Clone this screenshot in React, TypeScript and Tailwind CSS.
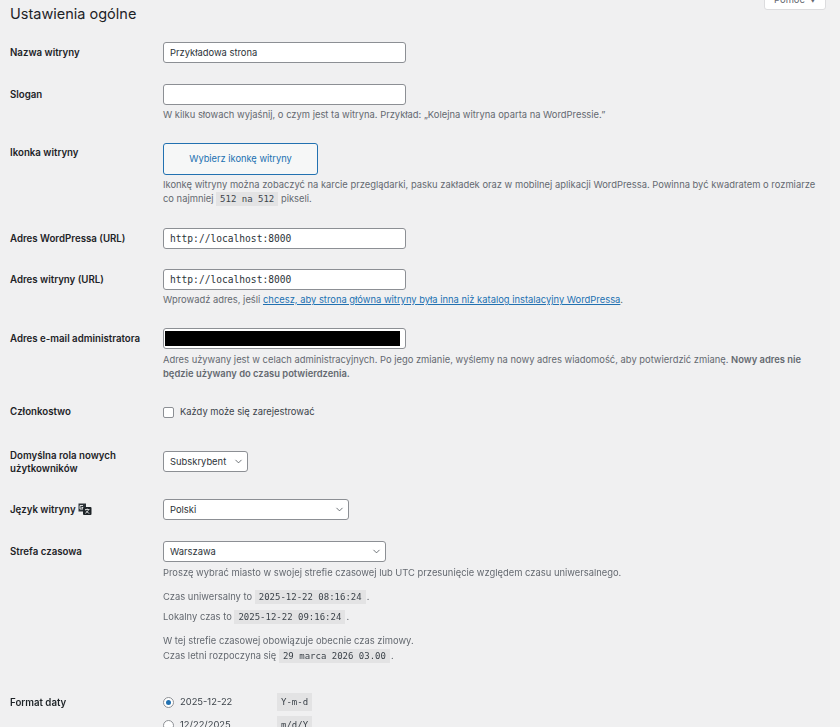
import React from 'react'
import { ChevronDown } from 'lucide-react'

const inputCls = 'block h-[21px] rounded-[3px] border border-[#8c8f94] bg-white px-[6px] text-[#2c3338]'
const descCls = 'max-w-[660px] text-[9.4px] leading-[14px] text-[#646970]'
const codeCls = 'bg-[#e3e3e4] px-[4px] py-[2px] font-["DejaVu_Sans_Mono",monospace] text-[9px] text-[#3c434a]'

const Row = ({
    label,
    top,
    labelCls = 'pt-[4px] leading-[14px]',
    children
  }:{
    label: React.ReactNode
    top: string
    labelCls?: string
    children: React.ReactNode
  }) => {
  return (
    <div className={`grid grid-cols-[153px_1fr] ${top}`}>
      <div className={`text-[9.7px] font-semibold text-[#1d2327] ${labelCls}`}>{label}</div>
      <div>{children}</div>
    </div>
  )
}

const Select = ({ value, width }:{ value: string, width: string }) => {
  return (
    <div className={`flex items-center justify-between !pr-[3px] ${inputCls} ${width}`}>
      <span className="pt-[1px] text-[9.4px]">{value}</span>
      <ChevronDown className="h-[11px] w-[11px] text-[#3c434a]" strokeWidth={1.6} />
    </div>
  )
}

const Translate = () => (
  <svg width="14" height="13" viewBox="0 0 14 13" className="ml-[2px] inline-block align-[-3px]">
    <path d="M0.5 0.5h7.5v3.5h-3v4.5h-4.5z" fill="#2c3338" />
    <path d="M2 2.5h3M2 2.5v3.5h3v-1.5h-1.5" fill="none" stroke="#f0f0f1" strokeWidth="0.9" />
    <rect x="5" y="4" width="8.5" height="8" rx="1" fill="#1d2327" />
    <path d="M7 6.5h4.5M9.2 5.5v1M10.6 6.5c-.5 2-2 3.2-3.4 3.8M7.8 7.6c.7 1.2 2 2.2 3.6 2.7" fill="none" stroke="#f0f0f1" strokeWidth="0.8" />
  </svg>
)

export default function App() {
  return (
    <div className="h-[727px] w-[840px] overflow-hidden bg-[#f0f0f1]">
      <div className='relative h-[727px] w-[840px] bg-[#f0f0f1] font-["Inter",sans-serif] blur-[0.4px]'>
        <div className="absolute right-0 top-0 h-full w-[10px] bg-[#f2f2f2]" />
        <div className="absolute right-[14px] top-[-10px] flex h-[20px] w-[62px] items-center justify-center gap-[5px] rounded-b-[3px] border border-[#dcdcde] bg-white text-[9.4px] text-[#646970]">
          Pomoc
          <span className="text-[6px]">▼</span>
        </div>

        <div className="px-[10px]">
          <h1 className="pt-[4px] text-[14.5px] font-normal leading-[19px] text-[#1d2327]">Ustawienia ogólne</h1>

          <Row label="Nazwa witryny" top="mt-[19px]">
            <div className={`${inputCls} w-[243px] text-[9.4px] leading-[19px]`}>Przykładowa strona</div>
          </Row>

          <Row label="Slogan" top="mt-[21px]">
            <div className={`${inputCls} w-[243px]`} />
            <p className={`${descCls} mt-[3px]`}>W kilku słowach wyjaśnij, o czym jest ta witryna. Przykład: „Kolejna witryna oparta na WordPressie.”</p>
          </Row>

          <Row label="Ikonka witryny" top="mt-[21px]" labelCls="pt-[3px] leading-[14px]">
            <div className="flex h-[32px] w-[155px] items-center justify-center rounded-[3px] border border-[#2271b1] bg-[#f6f7f7] text-[9.3px] text-[#2271b1]">Wybierz ikonkę witryny</div>
            <p className={`${descCls} mt-[3px]`}>
              Ikonkę witryny można zobaczyć na karcie przeglądarki, pasku zakładek oraz w mobilnej aplikacji WordPressa. Powinna być kwadratem o rozmiarze co najmniej <code className={codeCls}>512 na 512</code> pikseli.
            </p>
          </Row>

          <Row label="Adres WordPressa (URL)" top="mt-[22px]">
            <div className={`${inputCls} w-[243px] font-["DejaVu_Sans_Mono",monospace] text-[9.6px] leading-[19px]`}>http://localhost:8000</div>
          </Row>

          <Row label="Adres witryny (URL)" top="mt-[20px]">
            <div className={`${inputCls} w-[243px] font-["DejaVu_Sans_Mono",monospace] text-[9.6px] leading-[19px]`}>http://localhost:8000</div>
            <p className={`${descCls} mt-[3px]`}>
              Wprowadź adres, jeśli <a className="text-[#2271b1] underline">chcesz, aby strona główna witryny była inna niż katalog instalacyjny WordPressa</a>.
            </p>
          </Row>

          <Row label="Adres e-mail administratora" top="mt-[21px]">
            <div className={`${inputCls} flex w-[243px] items-center !px-[1px]`}>
              <div className="h-[15px] w-[235px] bg-black" />
            </div>
            <p className={`${descCls} mt-[4px]`}>
              Adres używany jest w celach administracyjnych. Po jego zmianie, wyślemy na nowy adres wiadomość, aby potwierdzić zmianę. <strong className="font-semibold">Nowy adres nie będzie używany do czasu potwierdzenia.</strong>
            </p>
          </Row>

          <Row label="Członkostwo" top="mt-[21px]" labelCls="pt-[3px] leading-[14px]">
            <label className="flex items-center gap-[6px] pt-[3px] text-[9.4px] leading-[14px] text-[#3c434a]">
              <span className="h-[11px] w-[11px] rounded-[2px] border border-[#8c8f94] bg-white" />
              Każdy może się zarejestrować
            </label>
          </Row>

          <Row label={<>Domyślna rola nowych<br />użytkowników</>} top="mt-[32px]" labelCls="-mt-[2px] leading-[13px]">
            <Select value="Subskrybent" width="w-[85px]" />
          </Row>

          <Row label={<>Język witryny<Translate /></>} top="mt-[24px]">
            <Select value="Polski" width="w-[186px]" />
          </Row>

          <Row label="Strefa czasowa" top="mt-[21px]">
            <Select value="Warszawa" width="w-[223px]" />
            <p className={`${descCls} mt-[4px]`}>Proszę wybrać miasto w swojej strefie czasowej lub UTC przesunięcie względem czasu uniwersalnego.</p>
            <p className={`${descCls} mt-[10px]`}>Czas uniwersalny to <code className={`${codeCls} -mr-[1.5px]`}>2025-12-22 08:16:24</code> .</p>
            <p className={`${descCls} mt-[6px]`}>Lokalny czas to <code className={`${codeCls} -mr-[1.5px]`}>2025-12-22 09:16:24</code> .</p>
            <p className={`${descCls} mt-[10px]`}>W tej strefie czasowej obowiązuje obecnie czas zimowy.</p>
            <p className={`${descCls} mt-[1px]`}>Czas letni rozpoczyna się <code className={`${codeCls} -mr-[1.5px]`}>29 marca 2026 03.00</code> .</p>
          </Row>

          <Row label="Format daty" top="mt-[30px]" labelCls="pt-[3px] leading-[14px]">
            <div className="flex items-center text-[9.4px] leading-[14px] text-[#3c434a]">
              <span className="mr-[6px] flex h-[11px] w-[11px] items-center justify-center rounded-full border border-[#8c8f94] bg-white">
                <span className="h-[5px] w-[5px] rounded-full bg-[#2271b1]" />
              </span>
              <span className="w-[97px]">2025-12-22</span>
              <code className={codeCls}>Y-m-d</code>
            </div>
            <div className="mt-[5px] flex items-center text-[9.4px] leading-[14px] text-[#3c434a]">
              <span className="mr-[6px] h-[11px] w-[11px] rounded-full border border-[#8c8f94] bg-white" />
              <span className="w-[97px]">12/22/2025</span>
              <code className={codeCls}>m/d/Y</code>
            </div>
          </Row>
        </div>
      </div>
    </div>
  )
}
